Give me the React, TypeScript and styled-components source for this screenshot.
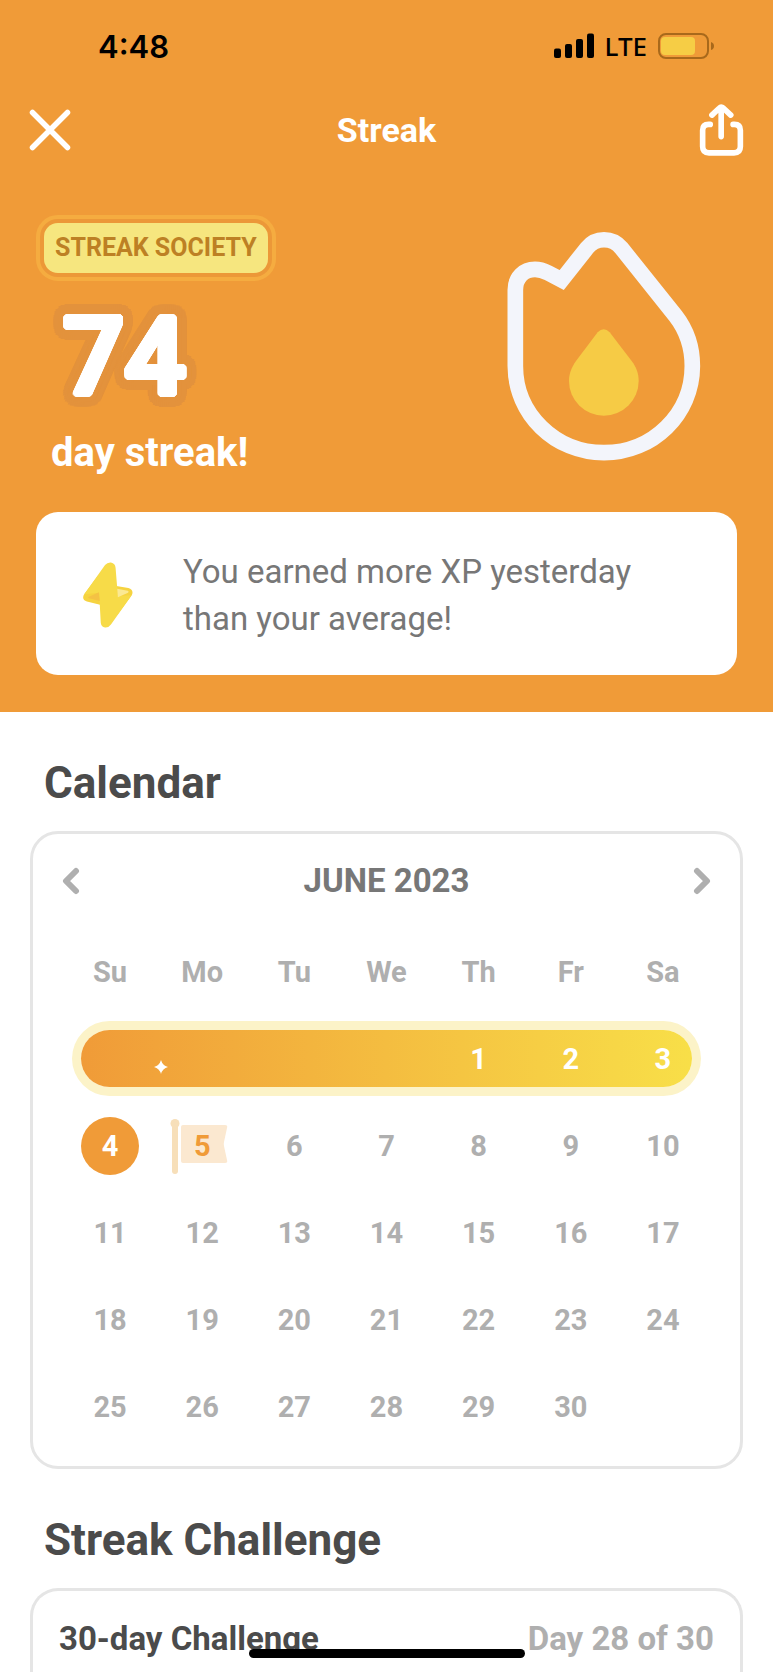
import React from "react";
import styled, { createGlobalStyle, css } from "styled-components";

const color = {
  orange: "#f09b38",
  halo: "#e3923c",
  ink: "#4b4b4b",
  text: "#777777",
  muted: "#afafaf",
  line: "#e5e5e5",
  white: "#ffffff",
};

const GlobalStyle = createGlobalStyle`
  *, *::before, *::after { box-sizing: border-box; }
  body { margin: 0; background: ${color.white}; font-family: Roboto, "Liberation Sans", sans-serif; }
  h1, h2, h3, p { margin: 0; }
  button { margin: 0; padding: 0; border: 0; background: none; color: inherit; cursor: pointer; font: inherit; }
  svg { display: block; }
`;

const Screen = styled.div`
  display: flex;
  flex-direction: column;
  min-height: 100vh;
`;

const Hero = styled.header`
  background: ${color.orange};
  color: ${color.white};
  padding-bottom: 37px;
`;

const StatusBar = styled.div`
  display: flex;
  align-items: center;
  justify-content: space-between;
  height: 92px;
  padding: 0 58px 0 98px;
  color: #000;
  font-family: Inter, sans-serif;
`;

const Clock = styled.span`
  font-size: 31px;
  font-weight: 600;
`;

const StatusIcons = styled.div`
  display: flex;
  align-items: center;
  gap: 11px;
`;

const Carrier = styled.span`
  font-family: "Noto Sans", sans-serif;
  font-size: 26px;
  line-height: 32px;
  font-weight: 500;
`;

const NavBar = styled.nav`
  display: grid;
  grid-template-columns: 1fr auto 1fr;
  align-items: center;
  height: 76px;
  padding: 0 29px;
`;

const NavButton = styled.button<{ $end?: boolean }>`
  justify-self: ${(p) => (p.$end ? "end" : "start")};
`;

const Title = styled.h1`
  font-size: 34px;
  line-height: 40px;
  font-weight: 700;
`;

const Summary = styled.div`
  display: flex;
  justify-content: space-between;
  padding: 47px 72px 0 36px;
`;

const Badge = styled.div`
  display: inline-flex;
  padding: 4px;
  border: 4px solid #f5ac40;
  border-radius: 22px;
  background: #ec9838;
`;

const BadgeLabel = styled.span`
  padding: 0 11px;
  border-radius: 14px;
  background: #f6e67f;
  color: #bd8024;
  font-size: 25px;
  line-height: 50px;
  font-weight: 700;
`;

/* A solid outline built from shadows placed evenly around a circle. */
const ring = (radius: number, tint: string) =>
  Array.from({ length: 40 }, (_, i) => {
    const a = (i / 40) * Math.PI * 2;
    return `${Math.round(Math.cos(a) * radius)}px ${Math.round(Math.sin(a) * radius)}px 0 ${tint}`;
  }).join(", ");

const Count = styled.p`
  margin-top: 20px;
  padding-left: 27px;
  font-size: 108px;
  line-height: 112px;
  font-weight: 500;
  text-shadow: ${ring(3, color.white)}, ${ring(8, color.halo)}, ${ring(13, color.halo)};
`;

const CountCaption = styled.p`
  margin-top: 18px;
  padding-left: 15px;
  font-size: 40px;
  line-height: 44px;
  font-weight: 700;
`;

const FlameWrap = styled.div`
  padding-top: 16px;
`;

const Tip = styled.section`
  display: flex;
  align-items: center;
  gap: 50px;
  margin: 37px 36px 0;
  padding: 36px 47px 33px;
  border-radius: 22px;
  background: ${color.white};
  color: ${color.text};
  font-size: 33px;
  line-height: 47px;

  svg { flex: none; }
`;

const Section = styled.section<{ $fill?: boolean }>`
  display: flex;
  flex-direction: column;
  padding: 45px 30px 0;
  ${(p) => p.$fill && css`flex: 1;`}
`;

const SectionTitle = styled.h2`
  margin-bottom: 22px;
  padding-left: 14px;
  color: ${color.ink};
  font-size: 44px;
  line-height: 52px;
  font-weight: 700;
`;

const Card = styled.div<{ $open?: boolean }>`
  border: 3px solid ${color.line};
  border-radius: 28px;
  ${(p) =>
    p.$open &&
    css`
      flex: 1;
      min-height: 84px;
      border-bottom: 0;
      border-radius: 28px 28px 0 0;
    `}
`;

const MonthBar = styled.div`
  display: flex;
  align-items: center;
  justify-content: space-between;
  height: 94px;
  padding: 0 29px;
  color: ${color.muted};
`;

const MonthName = styled.h3`
  color: ${color.text};
  font-size: 33px;
  line-height: 40px;
  font-weight: 700;
`;

const CalendarBody = styled.div`
  padding: 0 31px 16px;
`;

const Month = styled.table`
  width: 100%;
  table-layout: fixed;
  border-collapse: collapse;
  color: ${color.muted};
  font-size: 29px;
  line-height: 34px;
  font-weight: 700;
`;

const Week = styled.tr`
  position: relative;
  height: 87px;
`;

const Weekday = styled.th`
  padding: 0;
  font-weight: 700;
  text-align: center;
`;

type DayKind = "plain" | "perfect" | "done" | "today";

const dayTint: Record<DayKind, string> = {
  plain: color.muted,
  perfect: color.white,
  done: color.white,
  today: color.orange,
};

const Day = styled.td<{ $kind: DayKind }>`
  padding: 0;
  text-align: center;
  color: ${(p) => dayTint[p.$kind]};
`;

const DayInner = styled.span`
  position: relative;
  display: flex;
  align-items: center;
  justify-content: center;
  height: 58px;
`;

const DayNumber = styled.span`
  position: relative;
`;

const DoneDot = styled.span`
  display: grid;
  place-items: center;
  width: 58px;
  height: 58px;
  border-radius: 50%;
  background: ${color.orange};
`;

const PerfectPill = styled.span`
  position: absolute;
  top: 15px;
  left: 17px;
  right: 17px;
  height: 57px;
  border-radius: 29px;
  background: linear-gradient(90deg, #f09b38, #f8df48);
  box-shadow: 0 0 0 9px #fcf3c8;
`;

const SparkleIcon = styled.svg`
  position: absolute;
  top: 30px;
  left: -2px;
`;

const FlagIcon = styled.svg`
  position: absolute;
  top: 2px;
  left: 50%;
  margin-left: -32px;
`;

const ChallengeRow = styled.div`
  display: flex;
  align-items: center;
  justify-content: space-between;
  padding: 28px 26px;
  font-size: 33px;
  line-height: 40px;
  font-weight: 700;
`;

const ChallengeName = styled.h3`
  color: ${color.ink};
  font-size: inherit;
`;

const ChallengeDay = styled.span`
  color: ${color.muted};
`;

const HomeIndicator = styled.div`
  position: fixed;
  bottom: 14px;
  left: 0;
  right: 0;
  width: 276px;
  height: 9px;
  margin: 0 auto;
  border-radius: 5px;
  background: #000;
`;

const SignalIcon = () => (
  <svg width="40" height="26" viewBox="0 0 40 26" fill="#000" aria-hidden="true">
    <rect x="0" y="15.500" width="7" height="9.500" rx="2" />
    <rect x="11" y="11" width="7" height="14" rx="2" />
    <rect x="22" y="6" width="7" height="19" rx="2" />
    <rect x="33" y="0.500" width="7" height="24.500" rx="2" />
  </svg>
);

const BatteryIcon = () => (
  <svg width="57" height="26" viewBox="0 0 57 26" aria-hidden="true">
    <rect x="1" y="1" width="49" height="24" rx="7" fill="none" stroke="#a8691b" strokeWidth="2" />
    <rect x="3" y="4" width="34" height="18" rx="4" fill="#f6cd45" />
    <path d="M53 9 Q56 10 56 13 Q56 16 53 17 Z" fill="#a8691b" />
  </svg>
);

const CloseIcon = () => (
  <svg width="42" height="42" viewBox="0 0 42 42" stroke="#fff" strokeWidth="5.500" strokeLinecap="round" aria-hidden="true">
    <path d="M3.500 3.500 L38.500 38.500 M38.500 3.500 L3.500 38.500" />
  </svg>
);

const ShareIcon = () => (
  <svg width="45" height="54" viewBox="478 245 136 162" fill="none" stroke="#fff" strokeWidth="17" strokeLinecap="round" strokeLinejoin="round" aria-hidden="true">
    <path d="M512 309 H507 Q489 309 489 327 V376 Q489 395 508 395 H584 Q603 395 603 376 V327 Q603 309 585 309 H581" />
    <path d="M545 346 V258 M517 281 L539 260 Q545 254 552 260 L574 281" />
  </svg>
);

const FlameIcon = () => (
  <svg width="194" height="230" viewBox="82 61 582 690" aria-hidden="true">
    <path
      d="M107 450 V238 C107 200 132 176 166 176 C180 176 192 180 206 187 L246 208 L322 112 C348 79 398 79 425 112 L588 316 C622 360 638 415 638 466 C638 610 520 726 373 726 C226 726 107 610 107 466 Z"
      fill="none"
      stroke="#f3f5fb"
      strokeWidth="47"
      strokeLinejoin="miter"
    />
    <path
      d="M354 365 Q372 346 390 365 L456 451 C470 470 477 488 477 511 A104.500 104 0 0 1 268 511 C268 488 276 470 289 451 Z"
      fill="#f6cb45"
    />
  </svg>
);

const BoltIcon = () => (
  <svg width="50" height="66" viewBox="158 183 152 200" aria-hidden="true">
    <path d="M250 254 L296 262 Q314 268 306 284 L262 344 Z M222 316 L170 303 Q152 296 162 280 L205 222 Z" fill="#f6d340" />
    <path d="M225 192 Q232 183 243 184 Q256 187 257 200 L264 286 L306 284 L243 373 Q236 383 225 382 Q213 379 212 367 L207 276 L162 281 Z" fill="#f7db48" />
    <path d="M173 290 L206 275 L209 301 L176 293 Z" fill="#f4c244" />
    <path d="M262 264 L294 270 Q299 272 295 276 L264 290 Z" fill="#fbe993" />
  </svg>
);

const Chevron = ({ next }: { next?: boolean }) => (
  <svg width="18" height="28" viewBox="0 0 18 28" fill="none" stroke="currentColor" strokeWidth="6" strokeLinecap="round" strokeLinejoin="round" aria-hidden="true">
    <path d={next ? "M4 4 L14 14 L4 24" : "M14 4 L4 14 L14 24"} />
  </svg>
);

const Sparkle = () => (
  <SparkleIcon width="14" height="14" viewBox="0 0 14 14" aria-hidden="true">
    <path d="M7 0 Q8.500 5.500 14 7 Q8.500 8.500 7 14 Q5.500 8.500 0 7 Q5.500 5.500 7 0 Z" fill="#fff" />
  </SparkleIcon>
);

const Flag = () => (
  <FlagIcon width="58" height="55" viewBox="0 0 58 55" aria-hidden="true">
    <rect x="2" y="3" width="6" height="52" rx="3" fill="#f7dfb9" />
    <circle cx="5" cy="4.500" r="4.500" fill="#f7dfb9" />
    <path d="M13 6 H55 Q58 6 57 9 L54 23 Q53.500 25 54 27 L57 41 Q58 44 55 44 H13 Q11 44 11 42 V8 Q11 6 13 6 Z" fill="#fbe8d0" />
  </FlagIcon>
);

const weekdays = ["Su", "Mo", "Tu", "We", "Th", "Fr", "Sa"];

const weeks: (number | null)[][] = [
  [null, null, null, null, 1, 2, 3],
  [4, 5, 6, 7, 8, 9, 10],
  [11, 12, 13, 14, 15, 16, 17],
  [18, 19, 20, 21, 22, 23, 24],
  [25, 26, 27, 28, 29, 30, null],
];

const kindOf = (day: number | null, week: number): DayKind => {
  if (week === 0) return "perfect";
  if (day === 4) return "done";
  if (day === 5) return "today";
  return "plain";
};

const DayCell = ({ day, week, column }: { day: number | null; week: number; column: number }) => {
  const kind = kindOf(day, week);
  return (
    <Day $kind={kind}>
      {week === 0 && column === 0 && <PerfectPill />}
      <DayInner>
        {week === 0 && column === 1 && <Sparkle />}
        {kind === "today" && <Flag />}
        {kind === "done" ? <DoneDot>{day}</DoneDot> : <DayNumber>{day}</DayNumber>}
      </DayInner>
    </Day>
  );
};

export default function App() {
  return (
    <Screen>
      <GlobalStyle />
      <Hero>
        <StatusBar>
          <Clock>4:48</Clock>
          <StatusIcons>
            <SignalIcon />
            <Carrier>LTE</Carrier>
            <BatteryIcon />
          </StatusIcons>
        </StatusBar>
        <NavBar>
          <NavButton type="button" aria-label="Close"><CloseIcon /></NavButton>
          <Title>Streak</Title>
          <NavButton type="button" aria-label="Share" $end><ShareIcon /></NavButton>
        </NavBar>
        <Summary>
          <div>
            <Badge><BadgeLabel>STREAK SOCIETY</BadgeLabel></Badge>
            <Count>74</Count>
            <CountCaption>day streak!</CountCaption>
          </div>
          <FlameWrap><FlameIcon /></FlameWrap>
        </Summary>
        <Tip>
          <BoltIcon />
          <p>You earned more XP yesterday than your average!</p>
        </Tip>
      </Hero>

      <Section>
        <SectionTitle>Calendar</SectionTitle>
        <Card>
          <MonthBar>
            <button type="button" aria-label="Previous month"><Chevron /></button>
            <MonthName>JUNE 2023</MonthName>
            <button type="button" aria-label="Next month"><Chevron next /></button>
          </MonthBar>
          <CalendarBody>
            <Month>
              <thead>
                <Week>
                  {weekdays.map((name) => <Weekday key={name} scope="col">{name}</Weekday>)}
                </Week>
              </thead>
              <tbody>
                {weeks.map((days, week) => (
                  <Week key={week}>
                    {days.map((day, column) => (
                      <DayCell key={column} day={day} week={week} column={column} />
                    ))}
                  </Week>
                ))}
              </tbody>
            </Month>
          </CalendarBody>
        </Card>
      </Section>

      <Section $fill>
        <SectionTitle>Streak Challenge</SectionTitle>
        <Card $open>
          <ChallengeRow>
            <ChallengeName>30-day Challenge</ChallengeName>
            <ChallengeDay>Day 28 of 30</ChallengeDay>
          </ChallengeRow>
        </Card>
      </Section>
      <HomeIndicator />
    </Screen>
  );
}
